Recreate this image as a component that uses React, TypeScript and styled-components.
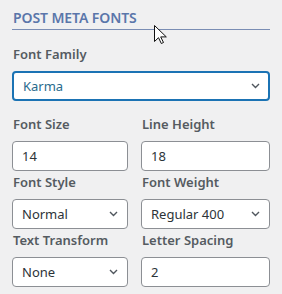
import styled, { createGlobalStyle } from 'styled-components';

const GlobalStyle = createGlobalStyle`
  html, body {
    margin: 0;
    padding: 0;
    background: #f0f0f1;
  }
  body {
    font-family: "Noto Sans", "Open Sans", sans-serif;
  }
`;

type Field = {
  label: string;
  value: string;
  kind: 'input' | 'select';
  options?: string[];
};

const fields: Field[] = [
  { label: 'Font Size', value: '14', kind: 'input' },
  { label: 'Line Height', value: '18', kind: 'input' },
  { label: 'Font Style', value: 'Normal', kind: 'select', options: ['Normal', 'Italic'] },
  {
    label: 'Font Weight',
    value: 'Regular 400',
    kind: 'select',
    options: ['Light 300', 'Regular 400', 'Bold 700'],
  },
  {
    label: 'Text Transform',
    value: 'None',
    kind: 'select',
    options: ['None', 'Uppercase', 'Lowercase'],
  },
  { label: 'Letter Spacing', value: '2', kind: 'input' },
];

const Chevron = () => (
  <ChevronIcon width="9" height="6" viewBox="0 0 9 6">
    <path d="M1 1l3.5 3.5L8 1" fill="none" stroke="#50575e" strokeWidth="1.4" />
  </ChevronIcon>
);

export default function App() {
  return (
    <>
      <GlobalStyle />
      <Panel>
        <Title>POST META FONTS</Title>

        <FamilyField>
          <Label>Font Family</Label>
          <SelectWrap>
            <Select $focused defaultValue="Karma">
              <option>Karma</option>
              <option>Roboto</option>
            </Select>
            <Chevron />
          </SelectWrap>
        </FamilyField>

        <Grid>
          {fields.map((f) => (
            <FieldBox key={f.label}>
              <Label>{f.label}</Label>
              {f.kind === 'input' ? (
                <Input defaultValue={f.value} />
              ) : (
                <SelectWrap>
                  <Select defaultValue={f.value}>
                    {f.options?.map((o) => (
                      <option key={o}>{o}</option>
                    ))}
                  </Select>
                  <Chevron />
                </SelectWrap>
              )}
            </FieldBox>
          ))}
        </Grid>

        <Cursor width="13" height="19" viewBox="0 0 13 19">
          <path
            d="M0.5 0.5v16l4-3.8 2.8 5.8 2.2-1-2.8-5.6h5.6z"
            fill="#fff"
            stroke="#111"
            strokeWidth="1"
            strokeLinejoin="miter"
          />
        </Cursor>
      </Panel>
    </>
  );
}

const Panel = styled.div`
  position: relative;
  width: 282px;
  height: 294px;
  padding: 8px 12px 0 12px;
  box-sizing: border-box;
  overflow: hidden;
`;

const Title = styled.div`
  font-size: 14px;
  line-height: 20px;
  font-weight: 600;
  color: #5a76aa;
  letter-spacing: -0.1px;
  padding: 0 0 1px 1px;
  border-bottom: 1px solid #7a8db4;
  width: 257px;
`;

const FamilyField = styled.div`
  margin-top: 15px;
  display: flex;
  flex-direction: column;
`;

const Label = styled.label`
  font-size: 13px;
  line-height: 18px;
  font-weight: 600;
  color: #555b61;
  padding-left: 1px;
  margin-bottom: 8px;
  white-space: nowrap;
`;

const Grid = styled.div`
  margin-top: 14px;
  display: grid;
  grid-template-columns: 116px 129px;
  column-gap: 13px;
  row-gap: 2px;
`;

const FieldBox = styled.div`
  display: flex;
  flex-direction: column;
`;

const SelectWrap = styled.div`
  position: relative;
`;

const controlBase = `
  display: block;
  width: 100%;
  height: 30px;
  box-sizing: border-box;
  margin: 0;
  background: #fff;
  border-radius: 4px;
  font-family: "Noto Sans", "Open Sans", sans-serif;
  font-size: 13px;
  outline: none;
`;

const Input = styled.input`
  ${controlBase}
  border: 1px solid #8c8f94;
  padding: 0 9px;
  color: #2c3338;
`;

const Select = styled.select<{ $focused?: boolean }>`
  ${controlBase}
  appearance: none;
  -webkit-appearance: none;
  padding: 0 24px 0 9px;
  border: ${(p) => (p.$focused ? '2px solid #1b73b4' : '1px solid #8c8f94')};
  color: ${(p) => (p.$focused ? '#2a6b8d' : '#2c3338')};
`;

const ChevronIcon = styled.svg`
  position: absolute;
  right: 10px;
  top: 50%;
  margin-top: -3px;
  pointer-events: none;
`;

const Cursor = styled.svg`
  position: absolute;
  left: 154px;
  top: 25px;
`;
